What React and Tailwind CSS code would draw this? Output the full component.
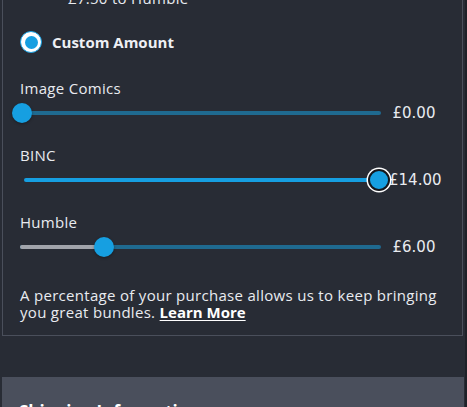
import React from "react";

const font = { fontFamily: "'Open Sans', Lato, sans-serif" };

function Slider({ label, value, thumb, variant }) {
  return (
    <div className="flex flex-col">
      <div className="h-[20px] flex items-center text-[15px] tracking-[0.3px] text-[#e9ebf0]">{label}</div>
      <div className="mt-[5px] h-[20px] flex items-center">
        <div className="relative w-[361px] h-[20px]">
          {variant === "empty" && (
            <div className="absolute left-0 right-0 top-[8px] h-[4px] rounded-full bg-[#1f6a90]" />
          )}
          {variant === "full" && (
            <div className="absolute left-[4px] right-[11px] top-[8px] h-[4px] rounded-full bg-[#169fe1]" />
          )}
          {variant === "partial" && (
            <>
              <div className="absolute left-0 right-0 top-[8px] h-[4px] rounded-full bg-[#1f6a90]" />
              <div
                className="absolute left-0 top-[8px] h-[4px] rounded-full bg-[#a1a4ab]"
                style={{ width: thumb + "px" }}
              />
            </>
          )}
          {variant === "full" ? (
            <div
              className="absolute top-[-1px] w-[22px] h-[22px] rounded-full bg-[#169fe1] border-2 border-[#15171c] shadow-[0_0_0_1.5px_#ffffff]"
              style={{ left: thumb - 11 + "px" }}
            />
          ) : (
            <div
              className="absolute top-0 w-[20px] h-[20px] rounded-full bg-[#169fe1] shadow-[0_1px_3px_rgba(0,0,0,0.35)]"
              style={{ left: thumb - 10 + "px" }}
            />
          )}
        </div>
        <div
          className="ml-[8px] w-[50px] text-center text-[#e9ebf0]"
          style={{ fontFamily: "'DejaVu Sans', sans-serif", fontSize: "15px" }}
        >
          {value}
        </div>
      </div>
    </div>
  );
}

export default function App() {
  return (
    <div className="w-[467px] h-[407px] overflow-hidden bg-[#282c35] flex" style={font}>
      <div className="w-[465px] flex flex-col">
        <div className="-mt-[12px] ml-[2px] w-[461px] border border-[#4a4f5b] pl-[17px] pb-[14px]">
          <div className="h-[18px] flex items-center text-[15px] tracking-[0.3px] text-[#e9ebf0]">
            <span className="ml-[30px] w-[18px]">•</span>
            <span>£7.50 to Humble</span>
          </div>
          <div className="mt-[23px] h-[24px] flex items-center">
            <div className="w-[22px] h-[22px] rounded-full bg-white border border-[#169fe1] flex items-center justify-center">
              <div className="w-[13px] h-[13px] rounded-full bg-[#169fe1]" />
            </div>
            <span className="ml-[10px] text-[15px] font-bold text-[#eef0f4]">Custom Amount</span>
          </div>
          <div className="mt-[24px] flex flex-col gap-[22px]">
            <Slider label="Image Comics" value="£0.00" thumb={2} variant="empty" />
            <Slider label="BINC" value="£14.00" thumb={359} variant="full" />
            <Slider label="Humble" value="£6.00" thumb={84} variant="partial" />
          </div>
          <p className="mt-[30px] text-[15px] leading-[17px] tracking-[0.3px] text-[#e9ebf0] pr-[20px]">
            A percentage of your purchase allows us to keep bringing you great bundles.{" "}
            <a className="font-bold tracking-normal text-white underline underline-offset-2">Learn More</a>
          </p>
        </div>
        <div className="mt-[41px] ml-[2px] w-[462px] h-[60px] bg-[#4a4f5c] pl-[17px] pt-[22px]">
          <div className="text-[17px] font-bold text-white">Shipping Information</div>
        </div>
      </div>
      <div className="w-[2px] bg-[#1e2128]" />
    </div>
  );
}
